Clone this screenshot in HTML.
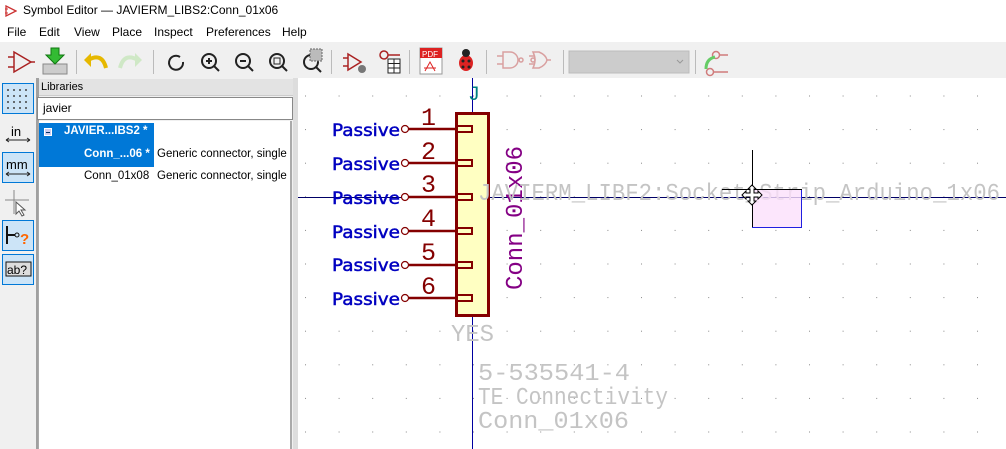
<!DOCTYPE html>
<html><head><meta charset="utf-8"><style>
*{margin:0;padding:0;box-sizing:border-box}
body{width:1006px;height:449px;overflow:hidden;background:#f0f0f0;font-family:"Liberation Sans",sans-serif;font-size:12px;position:relative}
.a{position:absolute}
</style></head><body>
<div class="a" style="left:0;top:0;width:1006px;height:21px;background:#fff"></div>
<svg class="a" style="left:5px;top:5px" width="12" height="12"><path d="M1 1 L11 6 L1 11 Z" fill="none" stroke="#c33" stroke-width="1.3"/><path d="M0 4h3M0 8h3" stroke="#c33"/></svg>
<div class="a" style="left:23px;top:3px;font-size:12px;color:#000">Symbol Editor — JAVIERM_LIBS2:Conn_01x06</div>
<div class="a" style="left:0;top:21px;width:1006px;height:21px;background:#fff"></div>
<div class="a" style="left:7px;top:25px">File</div>
<div class="a" style="left:39px;top:25px">Edit</div>
<div class="a" style="left:74px;top:25px">View</div>
<div class="a" style="left:112px;top:25px">Place</div>
<div class="a" style="left:154px;top:25px">Inspect</div>
<div class="a" style="left:206px;top:25px">Preferences</div>
<div class="a" style="left:282px;top:25px">Help</div>
<!-- toolbar -->
<svg class="a" style="left:0;top:42px" width="1006" height="36">
<rect width="1006" height="36" fill="#f0f0f0"/>
<g stroke="#bbb"><path d="M76.5 8v24M153.5 8v24M331.5 8v24M409.5 8v24M486.5 8v24M563.5 8v24M695.5 8v24"/></g>
<g fill="none" stroke="#a22" stroke-width="1.5"><path d="M14 10 L31 20 L14 30 Z"/><path d="M8 15h6M8 25h6M31 20h4"/></g>
<rect x="43" y="22" width="24" height="10" fill="#ccc" stroke="#888"/><path d="M51 6h8v7h5l-9 9-9-9h5z" fill="#3b3" stroke="#171"/>
<path d="M88 18 q14 -8 18 8" fill="none" stroke="#e6b800" stroke-width="4"/><path d="M84 18l7-7v14z" fill="#e6b800"/>
<path d="M138 18 q-14 -8 -18 8" fill="none" stroke="#cfe8c6" stroke-width="4"/><path d="M142 18l-7-7v14z" fill="#cfe8c6"/>
<g fill="none" stroke="#222" stroke-width="2"><path d="M180 15 a7 7 0 1 0 3 5"/><circle cx="209" cy="19" r="7"/><path d="M214 24l5 5M206 19h6M209 16v6"/><circle cx="243" cy="19" r="7"/><path d="M248 24l5 5M240 19h6"/><circle cx="277" cy="19" r="7"/><path d="M282 24l5 5"/><rect x="274" y="16" width="6" height="6" stroke-width="1"/><circle cx="311" cy="20" r="7"/><path d="M316 25l5 5"/></g>
<rect x="310" y="7" width="12" height="12" fill="#bbb" stroke="#666" stroke-dasharray="2 1"/>
<g fill="none" stroke="#a22" stroke-width="1.5"><path d="M348 12 L361 20 L348 28 Z"/><path d="M343 16h5M343 24h5"/><circle cx="384" cy="13" r="4"/><path d="M388 13h12"/></g>
<circle cx="362" cy="27" r="4" fill="#777"/><rect x="388" y="17" width="12" height="14" fill="#fff" stroke="#222"/><path d="M388 21.5h12M388 26h12M394 17v14" stroke="#222"/>
<rect x="420" y="6" width="22" height="26" fill="#fff" stroke="#999"/><rect x="420" y="6" width="22" height="10" fill="#d22"/><text x="422" y="15" font-size="8" fill="#fff" font-family="Liberation Sans">PDF</text><path d="M425 29 l5 -9 l5 9 M424 26h12" stroke="#d22" fill="none"/>
<ellipse cx="466" cy="21" rx="7" ry="8" fill="#d22"/><circle cx="466" cy="11" r="4" fill="#222"/><g fill="#222"><circle cx="463" cy="19" r="1.5"/><circle cx="469" cy="19" r="1.5"/><circle cx="463" cy="25" r="1.5"/><circle cx="469" cy="25" r="1.5"/></g>
<g fill="none" stroke="#d9a0a0" stroke-width="1.5"><path d="M503 10h7a8 8 0 0 1 0 16h-7z"/><path d="M497 14h6M497 22h6M518 18h2"/><circle cx="521" cy="18" r="2"/><path d="M533 10h6q7 3 8 8q-1 5-8 8h-6q4-8 0-16z"/><path d="M529 14h6M529 22h6M547 18h4"/><circle cx="533" cy="18" r="2"/></g>
<rect x="569" y="9" width="120" height="22" fill="#ccc" stroke="#bbb"/><path d="M677 18l3 3 3-3" stroke="#999" fill="none"/>
<g fill="none" stroke="#d07b7b" stroke-width="1.5"><circle cx="716" cy="13" r="3.5"/><circle cx="710" cy="30" r="3.5"/><path d="M720 13h8M714 30h14"/></g><path d="M706 27 q0 -10 9 -12" stroke="#6c6" stroke-width="3" fill="none"/>
</svg>
<!-- left toolbar -->
<div class="a" style="left:0;top:78px;width:36px;height:371px;background:#f0f0f0"></div>
<svg class="a" style="left:0;top:78px" width="36" height="220">
<g fill="#cce4f7" stroke="#0078d7"><rect x="2.5" y="5.5" width="31" height="30"/><rect x="2.5" y="74.5" width="31" height="30"/><rect x="2.5" y="142.5" width="31" height="30"/><rect x="2.5" y="176.5" width="31" height="30"/></g>
<g fill="#444"><circle cx="8" cy="12" r="1"/><circle cx="14" cy="12" r="1"/><circle cx="20" cy="12" r="1"/><circle cx="26" cy="12" r="1"/><circle cx="8" cy="18" r="1"/><circle cx="14" cy="18" r="1"/><circle cx="20" cy="18" r="1"/><circle cx="26" cy="18" r="1"/><circle cx="8" cy="24" r="1"/><circle cx="14" cy="24" r="1"/><circle cx="20" cy="24" r="1"/><circle cx="26" cy="24" r="1"/><circle cx="8" cy="30" r="1"/><circle cx="14" cy="30" r="1"/><circle cx="20" cy="30" r="1"/><circle cx="26" cy="30" r="1"/></g>
<text x="11" y="58" font-size="13" font-family="Liberation Sans">in</text><path d="M6 62h24M6 62l3-2M6 62l3 2M30 62l-3-2M30 62l-3 2" stroke="#222"/>
<text x="6" y="91" font-size="13" font-family="Liberation Sans">mm</text><path d="M6 96h24M6 96l3-2M6 96l3 2M30 96l-3-2M30 96l-3 2" stroke="#222"/>
<path d="M14 112v24M5 122h24" stroke="#888"/><path d="M16 124v12l3-3 3 5 2-1-3-5h4z" fill="#fff" stroke="#555"/>
<path d="M7 148v18M7 157h8" stroke="#111" stroke-width="2"/><circle cx="17" cy="157" r="2" fill="none" stroke="#111"/><text x="20" y="166" font-size="15" font-weight="bold" fill="#f60" font-family="Liberation Sans">?</text>
<rect x="6" y="184" width="25" height="14" fill="#ddd" stroke="#111"/><text x="7" y="196" font-size="12" font-family="Liberation Sans">ab?</text>
</svg>
<!-- libraries panel -->
<div class="a" style="left:36px;top:78px;width:3px;height:371px;background:#a0a0a0"></div>
<div class="a" style="left:39px;top:79px;width:254px;height:17px;background:#e3e3e3;border-bottom:1px solid #ccc;padding-left:2px;font-size:11px;line-height:16px">Libraries</div>
<div class="a" style="left:37px;top:97px;width:256px;height:23px;background:#fff;border:1px solid #888;padding-left:5px;font-size:12px;line-height:21px">javier</div>
<div class="a" style="left:38px;top:121px;width:254px;height:328px;background:#fff;border-left:1px solid #aaa;border-right:2px solid #aaa"></div>
<div class="a" style="left:39px;top:123px;width:115px;height:44px;background:#0078d7"></div>
<div class="a" style="left:44px;top:128px;width:8px;height:8px;border:1px solid #fff;background:#cce"></div>
<div class="a" style="left:46px;top:131.5px;width:4px;height:1px;background:#036"></div>
<div class="a" style="left:64px;top:125px;color:#fff;font-weight:bold;font-size:11.5px">JAVIER...IBS2 *</div>
<div class="a" style="left:84px;top:148px;color:#fff;font-weight:bold;font-size:11.5px">Conn_...06 *</div>
<div class="a" style="left:157px;top:148px;font-size:11.5px;white-space:nowrap;width:134px;overflow:hidden">Generic connector, single</div>
<div class="a" style="left:84px;top:170px;font-size:11.5px">Conn_01x08</div>
<div class="a" style="left:157px;top:170px;font-size:11.5px;white-space:nowrap;width:134px;overflow:hidden">Generic connector, single</div>
<div class="a" style="left:293px;top:78px;width:5px;height:371px;background:#ddd"></div>
<!-- canvas -->
<svg class="a" style="left:298px;top:78px" width="708" height="371" font-family="Liberation Mono, DejaVu Sans Mono, monospace">
<defs><pattern id="g" x="7" y="17.5" width="33.6" height="33.6" patternUnits="userSpaceOnUse"><rect x="0" y="0" width="1" height="1" fill="#888"/></pattern></defs>
<rect width="708" height="371" fill="#fff"/>
<rect width="708" height="371" fill="url(#g)"/>
<path d="M0 119.5H708" stroke="#000066"/>
<path d="M174.5 0V371" stroke="#0000a0"/>
<rect x="158.5" y="35.5" width="32" height="202" fill="#ffffc2" stroke="#840000" stroke-width="3"/>
<g stroke="#840000" stroke-width="2.5" fill="none">
<path d="M109 51h49M109 85h49M109 119h49M109 153h49M109 187h49M109 220h49"/>
<path d="M158 48h16v6h-16M158 82h16v6h-16M158 116h16v6h-16M158 150h16v6h-16M158 184h16v6h-16M158 217h16v6h-16" stroke-width="2"/>
</g>
<g fill="#fff" stroke="#840000" stroke-width="1.2"><circle cx="107" cy="51" r="3.5"/><circle cx="107" cy="85" r="3.5"/><circle cx="107" cy="119" r="3.5"/><circle cx="107" cy="153" r="3.5"/><circle cx="107" cy="187" r="3.5"/><circle cx="107" cy="220" r="3.5"/></g>
<g fill="#840000" font-size="25"><text x="123" y="47">1</text><text x="123" y="81">2</text><text x="123" y="114">3</text><text x="123" y="148">4</text><text x="123" y="182">5</text><text x="123" y="216">6</text></g>
<g fill="#0000c0" stroke="#0000c0" stroke-width="0.5" font-size="17" font-family="DejaVu Sans, sans-serif"><text x="34" y="58" textLength="68" lengthAdjust="spacingAndGlyphs">Passive</text><text x="34" y="92" textLength="68" lengthAdjust="spacingAndGlyphs">Passive</text><text x="34" y="126" textLength="68" lengthAdjust="spacingAndGlyphs">Passive</text><text x="34" y="160" textLength="68" lengthAdjust="spacingAndGlyphs">Passive</text><text x="34" y="193" textLength="68" lengthAdjust="spacingAndGlyphs">Passive</text><text x="34" y="227" textLength="68" lengthAdjust="spacingAndGlyphs">Passive</text></g>
<text x="0" y="0" transform="translate(224 212) rotate(-90)" fill="#840084" font-size="24">Conn_01x06</text>
<text x="170" y="22" fill="#008080" font-size="20">J</text>
<g fill="#c4c4c4" font-size="24"><text x="180" y="122" textLength="522" lengthAdjust="spacingAndGlyphs">JAVIERM_LIBF2:Socket_Strip_Arduino_1x06</text>
<text x="153" y="263" textLength="43" lengthAdjust="spacingAndGlyphs">YES</text><text x="180" y="302" textLength="152" lengthAdjust="spacingAndGlyphs">5-535541-4</text><text x="180" y="326" textLength="190" lengthAdjust="spacingAndGlyphs">TE Connectivity</text><text x="180" y="350" textLength="151" lengthAdjust="spacingAndGlyphs">Conn_01x06</text></g>
<rect x="454.5" y="111.5" width="49" height="38" fill="#fbe0fb" fill-opacity="0.8" stroke="#2020e0"/>
<path d="M454.5 72v77M424 111.5h80" stroke="#000"/>
<g transform="translate(454 117)" stroke="#000" fill="#fff"><path d="M0 -10l4 4h-2v4h4v-2l4 4-4 4v-2h-4v4h2l-4 4-4-4h2v-4h-4v2l-4-4 4-4v2h4v-4h-2z"/></g>
</svg>
</body></html>
